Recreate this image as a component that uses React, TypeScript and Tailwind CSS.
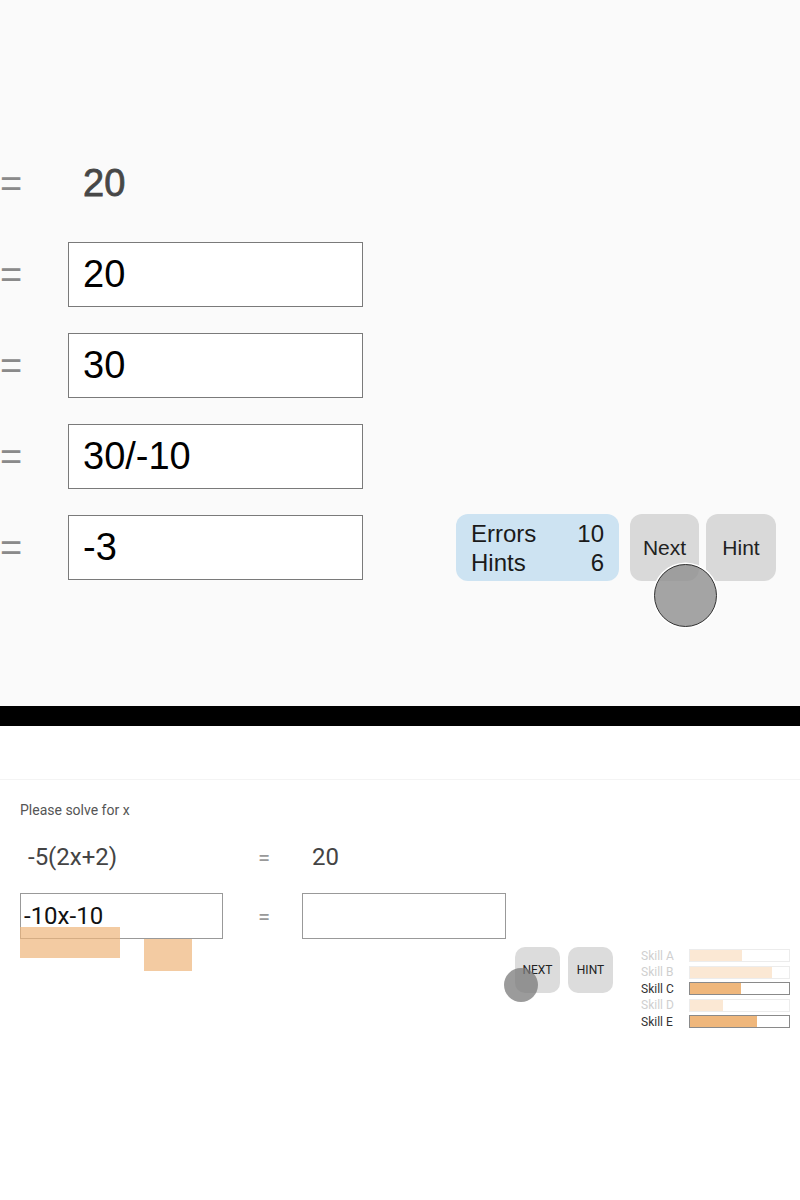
const steps = ['20', '30', '30/-10', '-3']

const skills = [
  { name: 'Skill A', pct: 53, active: false },
  { name: 'Skill B', pct: 83, active: false },
  { name: 'Skill C', pct: 52, active: true },
  { name: 'Skill D', pct: 33, active: false },
  { name: 'Skill E', pct: 68, active: true },
]

function Equals() {
  return (
    <span className="w-[68px] shrink-0 text-[38px] leading-none text-[#8a8a8a]">=</span>
  )
}

function StepBox({ value }: { value: string }) {
  return (
    <div className="flex h-[65px] w-[295px] shrink-0 items-center border border-[#7a7a7a] bg-white pl-[14px] text-[38px] text-black">
      {value}
    </div>
  )
}

function TopPanel() {
  return (
    <section className="flex h-[706px] flex-col gap-[26px] bg-[#fafafa] pt-[151px] font-['Liberation_Sans',sans-serif]">
      <div className="flex h-[65px] items-center">
        <Equals />
        <span className="pl-[15px] text-[38px] text-[#474747] [-webkit-text-stroke:0.8px_#474747]">20</span>
      </div>
      {steps.map((s, i) => (
        <div key={s} className="flex h-[65px] items-center">
          <Equals />
          <StepBox value={s} />
          {i === steps.length - 1 && (
            <div className="ml-[93px] flex h-[67px] items-stretch gap-[7px]">
              <div className="mr-[4px] flex w-[163px] flex-col justify-center rounded-[12px] bg-[#cde3f2] px-[15px] text-[24px] leading-[29px] text-[#1a1a1a]">
                <div className="flex justify-between">
                  <span>Errors</span>
                  <span>10</span>
                </div>
                <div className="flex justify-between">
                  <span>Hints</span>
                  <span>6</span>
                </div>
              </div>
              <div className="relative flex w-[69px] items-center justify-center rounded-[12px] bg-[#d9d9d9] text-[21px] text-[#222]">
                Next
                <span className="absolute left-[24px] top-[50px] h-[63px] w-[63px] rounded-full border-[1.5px] border-[#333] bg-[#8f8f8f]/80 shadow-[0_0_0_1.5px_#fff]" />
              </div>
              <div className="flex w-[70px] items-center justify-center rounded-[12px] bg-[#d9d9d9] text-[21px] text-[#222]">
                Hint
              </div>
            </div>
          )}
        </div>
      ))}
    </section>
  )
}

function SkillBars() {
  return (
    <div className="flex flex-col gap-[3.5px]">
      {skills.map((s) => (
        <div key={s.name} className="flex h-[13px] items-center">
          <span className={`w-[48px] text-[12px] leading-none ${s.active ? 'text-[#333]' : 'text-[#cfcfcf]'}`}>
            {s.name}
          </span>
          <div className={`h-[13px] w-[101px] border bg-white ${s.active ? 'border-[#8a8a8a]' : 'border-[#ececec]'}`}>
            <div
              className={`h-full ${s.active ? 'bg-[#efb77c]' : 'bg-[#fbe8d4]'}`}
              style={{ width: `${s.pct}%` }}
            />
          </div>
        </div>
      ))}
    </div>
  )
}

function BottomPanel() {
  return (
    <section className="h-[474px] bg-white font-['Roboto',sans-serif]">
      <div className="mt-[53px] border-t border-[#f4f4f4] pl-[20px] pt-[20px]">
        <p className="text-[14px] text-[#555]">Please solve for x</p>
        <div className="mt-[18px] grid grid-cols-[203px_79px_204px] items-center">
          <span className="pl-[8px] text-[24px] text-[#444]">-5(2x+2)</span>
          <span className="pl-[35px] text-[22px] text-[#999]">=</span>
          <span className="pl-[10px] text-[24px] text-[#444]">20</span>
        </div>
        <div className="relative mt-[18px] grid grid-cols-[203px_79px_204px] items-center">
          <div className="flex h-[46px] items-center border border-[#999] pl-[3px] text-[24px] text-[#111]">-10x-10</div>
          <span className="pl-[35px] text-[22px] text-[#999]">=</span>
          <div className="h-[46px] border border-[#999]" />
          <span className="absolute left-0 top-[34px] h-[31px] w-[100px] bg-[#eeb57a]/70" />
          <span className="absolute left-[124px] top-[46px] h-[32px] w-[48px] bg-[#eeb57a]/70" />
        </div>
        <div className="mt-[8px] flex items-start pl-[495px]">
          <div className="relative flex h-[46px] w-[45px] items-center justify-center rounded-[10px] bg-[#dcdcdc] text-[12px] text-[#222]">
            NEXT
            <span className="absolute left-[-11px] top-[21px] h-[34px] w-[34px] rounded-full bg-[#7a7a7a]/75" />
          </div>
          <div className="ml-[8px] flex h-[46px] w-[45px] items-center justify-center rounded-[10px] bg-[#dcdcdc] text-[12px] text-[#222]">
            HINT
          </div>
          <div className="ml-[28px] mt-[2px]">
            <SkillBars />
          </div>
        </div>
      </div>
    </section>
  )
}

export default function App() {
  return (
    <div className="w-[800px] overflow-hidden">
      <TopPanel />
      <div className="h-[20px] bg-black" />
      <BottomPanel />
    </div>
  )
}
